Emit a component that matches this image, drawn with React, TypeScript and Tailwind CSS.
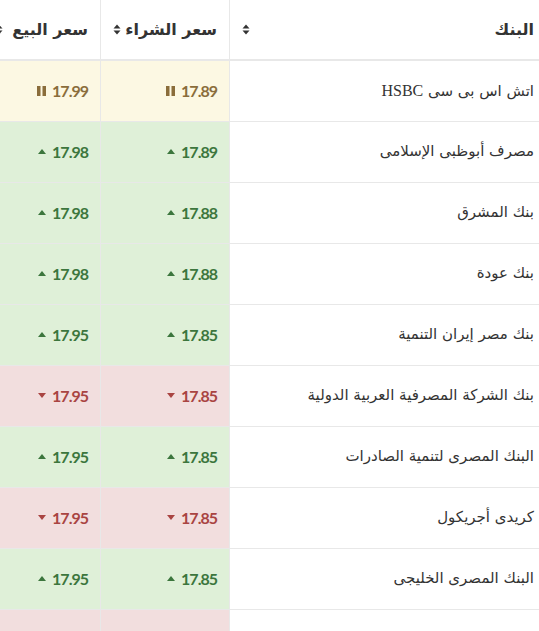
type Trend = "up" | "down" | "same";

const rows: { bank: string; buy: string; sell: string; trend: Trend }[] = [
  { bank: "اتش اس بى سى HSBC", buy: "17.89", sell: "17.99", trend: "same" },
  { bank: "مصرف أبوظبى الإسلامى", buy: "17.89", sell: "17.98", trend: "up" },
  { bank: "بنك المشرق", buy: "17.88", sell: "17.98", trend: "up" },
  { bank: "بنك عودة", buy: "17.88", sell: "17.98", trend: "up" },
  { bank: "بنك مصر إيران التنمية", buy: "17.85", sell: "17.95", trend: "up" },
  { bank: "بنك الشركة المصرفية العربية الدولية", buy: "17.85", sell: "17.95", trend: "down" },
  { bank: "البنك المصرى لتنمية الصادرات", buy: "17.85", sell: "17.95", trend: "up" },
  { bank: "كريدى أجريكول", buy: "17.85", sell: "17.95", trend: "down" },
  { bank: "البنك المصرى الخليجى", buy: "17.85", sell: "17.95", trend: "up" },
  { bank: "بنك الإمارات دبى الوطنى", buy: "17.85", sell: "17.95", trend: "down" },
];

const cellTone: Record<Trend, string> = {
  up: "bg-[#dff0d8] text-[#3c763d]",
  down: "bg-[#f2dede] text-[#a94442]",
  same: "bg-[#fcf8e3] text-[#8a6d3b]",
};

function SortIcon() {
  return (
    <svg width="8" height="11" viewBox="0 0 8 11" className="shrink-0">
      <path d="M4 0.5 L7.5 4.5 H0.5 Z" fill="#333" />
      <path d="M4 10.5 L7.5 6.5 H0.5 Z" fill="#333" />
    </svg>
  );
}

function TrendIcon({ trend }: { trend: Trend }) {
  if (trend === "same") {
    return (
      <svg width="9" height="10" viewBox="0 0 9 10" className="shrink-0">
        <rect x="0" y="0" width="3.5" height="10" fill="currentColor" />
        <rect x="5.5" y="0" width="3.5" height="10" fill="currentColor" />
      </svg>
    );
  }
  return (
    <svg width="8" height="5" viewBox="0 0 8 5" className="shrink-0">
      {trend === "up" ? (
        <path d="M4 0 L8 5 H0 Z" fill="currentColor" />
      ) : (
        <path d="M4 5 L8 0 H0 Z" fill="currentColor" />
      )}
    </svg>
  );
}

function Price({ value, trend }: { value: string; trend: Trend }) {
  return (
    <td className={`border border-[#e8e8e8] px-3 ${cellTone[trend]}`}>
      <div className="flex items-center justify-start gap-[6px]">
        <span className="font-['Lato',sans-serif] text-[16px] font-bold tracking-[-1px]">{value}</span>
        <TrendIcon trend={trend} />
      </div>
    </td>
  );
}

export default function App() {
  return (
    <div dir="rtl" className="h-[631px] w-[539px] overflow-hidden bg-white font-['DejaVu_Sans','Noto_Sans',sans-serif] text-[#333]">
      <table className="mr-[-8px] w-[564px] table-fixed border-collapse">
        <colgroup>
          <col className="w-[317px]" />
          <col className="w-[129px]" />
          <col className="w-[118px]" />
        </colgroup>
        <thead>
          <tr className="h-[60px]">
            {["البنك", "سعر الشراء", "سعر البيع"].map((h) => (
              <th key={h} className="border-x border-b-2 border-[#e8e8e8] px-3 text-right">
                <div className="flex items-center justify-between">
                  <span className="text-[16px] font-bold">{h}</span>
                  <SortIcon />
                </div>
              </th>
            ))}
          </tr>
        </thead>
        <tbody>
          {rows.map((r) => (
            <tr key={r.bank} className="h-[61px]">
              <td className="border border-[#e8e8e8] px-3 text-right text-[15px]">
                {r.bank.includes("HSBC") ? (
                  <>
                    اتش اس بى سى <span className="font-['Liberation_Serif',serif] text-[16px]">HSBC</span>
                  </>
                ) : (
                  r.bank
                )}
              </td>
              <Price value={r.buy} trend={r.trend} />
              <Price value={r.sell} trend={r.trend} />
            </tr>
          ))}
        </tbody>
      </table>
    </div>
  );
}
